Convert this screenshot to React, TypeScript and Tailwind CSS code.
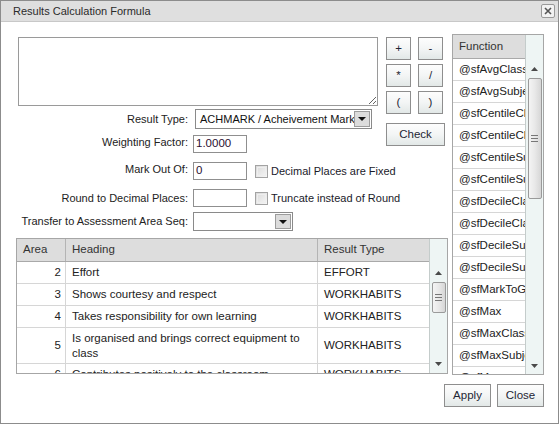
import React from 'react';

const font = { fontFamily: '"Liberation Sans", Arial, sans-serif' };

const Btn: React.FC<{ label: string; className?: string }> = ({ label, className = '' }) => (
  <button
    className={`flex items-center justify-center border border-[#8e8e8e] bg-linear-to-b from-[#fdfdfd] via-[#f3f5f5] to-[#e2e8e7] text-[11.5px] text-[#1e2634] ${className}`}
  >
    {label}
  </button>
);

const Arrow: React.FC<{ down?: boolean }> = ({ down }) => (
  <svg width="7" height="4" viewBox="0 0 7 4" className="block shrink-0">
    {down ? <path d="M0 0h7L3.5 4z" fill="#4a4a4a" /> : <path d="M0 4h7L3.5 0z" fill="#4a4a4a" />}
  </svg>
);

// fake vertical scrollbar, offsets in px from its top
const Scrollbar: React.FC<{ arrowTop: number; thumbTop: number; thumbHeight: number; downBottom: number }> = ({
  arrowTop,
  thumbTop,
  thumbHeight,
  downBottom,
}) => (
  <div className="flex h-full w-[18px] shrink-0 flex-col items-center border-l border-[#c4cccb] bg-[#eef5f4]">
    <div style={{ height: arrowTop }} className="shrink-0" />
    <Arrow />
    <div style={{ height: thumbTop - arrowTop - 4 }} className="shrink-0" />
    <div
      style={{ height: thumbHeight }}
      className="flex w-[14px] shrink-0 flex-col items-center justify-center gap-[2px] rounded-[2px] border border-[#9a9a9a] bg-linear-to-r from-[#f4f4f4] via-[#e8e8e8] to-[#d6d6d6]"
    >
      <div className="h-px w-[7px] bg-[#777]" />
      <div className="h-px w-[7px] bg-[#777]" />
      <div className="h-px w-[7px] bg-[#777]" />
    </div>
    <div className="flex-1" />
    <Arrow down />
    <div style={{ height: downBottom }} className="shrink-0" />
  </div>
);

const Select: React.FC<{ value?: string; className?: string }> = ({ value = '', className = '' }) => (
  <div className={`flex items-center border border-[#8a8a8a] bg-white p-px ${className}`}>
    <span className="flex-1 overflow-hidden whitespace-nowrap pl-[3px] text-[11px] text-[#111]">{value}</span>
    <div className="flex h-full w-[16px] shrink-0 items-center justify-center border border-[#9c9c9c] bg-[#dcdcdc]">
      <svg width="8" height="4" viewBox="0 0 8 4">
        <path d="M0 0h8L4 4z" fill="#111" />
      </svg>
    </div>
  </div>
);

const Input: React.FC<{ value?: string }> = ({ value = '' }) => (
  <div className="flex h-[18px] w-[54px] shrink-0 items-center border border-[#8f8f8f] bg-white pl-[2px] text-[11.5px] text-[#2a1030]">
    {value}
  </div>
);

const Check: React.FC<{ label: string }> = ({ label }) => (
  <div className="ml-[8px] flex h-[18px] items-center gap-[3px] whitespace-nowrap">
    <div className="h-[13px] w-[13px] shrink-0 border border-[#a3a3a3] bg-linear-to-br from-[#d9d9d9] to-[#f7f7f7] p-px">
      <div className="h-full w-full border border-[#eeeeee]" />
    </div>
    <span className="text-[#1a1a2a]">{label}</span>
  </div>
);

const rows = [
  { area: '2', heading: 'Effort', type: 'EFFORT', tall: false },
  { area: '3', heading: 'Shows courtesy and respect', type: 'WORKHABITS', tall: false },
  { area: '4', heading: 'Takes responsibility for own learning', type: 'WORKHABITS', tall: false },
  { area: '5', heading: 'Is organised and brings correct equipment to class', type: 'WORKHABITS', tall: true },
  { area: '6', heading: 'Contributes positively to the classroom', type: 'WORKHABITS', tall: false },
];

const functions = [
  '@sfAvgClass',
  '@sfAvgSubject',
  '@sfCentileClass',
  '@sfCentileClassGroup',
  '@sfCentileSubject',
  '@sfCentileSubjectGroup',
  '@sfDecileClass',
  '@sfDecileClassGroup',
  '@sfDecileSubject',
  '@sfDecileSubjectGroup',
  '@sfMarkToGrade',
  '@sfMax',
  '@sfMaxClass',
  '@sfMaxSubject',
  '@sfMean',
];

export default function App() {
  return (
    <div style={font} className="flex h-[424px] w-[559px] flex-col overflow-hidden border border-[#8c8c8c] bg-white text-[11px] text-[#222]">
      {/* title bar */}
      <div className="flex h-[21px] shrink-0 items-center justify-between border-b border-[#c8c8c8] bg-[#dfdfdf] pl-[12px] pr-[3px]">
        <span className="text-[11px] text-[#2b2b2b]">Results Calculation Formula</span>
        <div className="flex h-[14px] w-[14px] items-center justify-center rounded-[2px] border border-[#9a9a9a] bg-[#f2f2f2]">
          <svg width="8" height="8" viewBox="0 0 8 8">
            <path d="M1 1l6 6M7 1l-6 6" stroke="#555" strokeWidth="1.6" />
          </svg>
        </div>
      </div>

      <div className="flex flex-col pl-[15px] pt-[12px]">
        <div className="flex gap-[4px]">
          {/* left side */}
          <div className="flex w-[432px] shrink-0 flex-col">
            <div className="flex pt-[3px]">
              <div className="flex w-[370px] shrink-0 flex-col whitespace-nowrap">
                <textarea className="ml-[2px] h-[69px] w-[360px] resize border border-[#9a9a9a] outline-none" />

                <div className="mt-[3px] flex items-center">
                  <div className="w-[177px] shrink-0 pr-[5px] text-right">Result Type:</div>
                  <Select value="ACHMARK / Acheivement Mark" className="ml-[2px] h-[20px] w-[177px]" />
                </div>
                <div className="mt-[6px] flex items-start">
                  <div className="w-[177px] shrink-0 pr-[5px] text-right leading-[14px]">Weighting Factor:</div>
                  <Input value="1.0000" />
                </div>
                <div className="mt-[9px] flex items-start">
                  <div className="w-[177px] shrink-0 pr-[5px] text-right leading-[14px]">Mark Out Of:</div>
                  <Input value="0" />
                  <Check label="Decimal Places are Fixed" />
                </div>
                <div className="mt-[9px] flex items-start">
                  <div className="w-[177px] shrink-0 pr-[5px] pt-[2px] text-right leading-[14px]">Round to Decimal Places:</div>
                  <Input />
                  <Check label="Truncate instead of Round" />
                </div>
                <div className="mt-[5px] flex items-center">
                  <div className="w-[177px] shrink-0 pr-[5px] text-right">Transfer to Assessment Area Seq:</div>
                  <Select className="h-[19px] w-[100px]" />
                </div>
              </div>

              <div className="flex flex-col">
                <div className="grid grid-cols-[25px_25px] gap-x-[7px] gap-y-[4px]">
                  <Btn label="+" className="h-[23px]" />
                  <Btn label="-" className="h-[23px]" />
                  <Btn label="*" className="h-[23px]" />
                  <Btn label="/" className="h-[23px]" />
                  <Btn label="(" className="h-[23px]" />
                  <Btn label=")" className="h-[23px]" />
                </div>
                <Btn label="Check" className="mt-[9px] h-[23px] w-[59px]" />
              </div>
            </div>

            {/* areas table */}
            <div className="mt-[7px] flex h-[136px] overflow-hidden border border-[#a6a6a6]">
              <div className="flex w-[413px] flex-col overflow-hidden text-[11.5px]">
                <div className="flex h-[23px] shrink-0 border-b border-[#a9a9a9] bg-[#dddddd] text-[#333]">
                  <div className="flex w-[49px] items-center border-r border-[#b4b4b4] pl-[6px]">Area</div>
                  <div className="flex w-[252px] items-center border-r border-[#b4b4b4] pl-[6px]">Heading</div>
                  <div className="flex flex-1 items-center pl-[6px]">Result Type</div>
                </div>
                {rows.map((r) => (
                  <div key={r.area} className={`flex shrink-0 border-b border-[#d6d6d6] ${r.tall ? 'h-[36px]' : 'h-[22px]'}`}>
                    <div className="flex w-[49px] items-center justify-end border-r border-[#d6d6d6] pr-[4px]">{r.area}</div>
                    <div className="flex w-[252px] items-center overflow-hidden border-r border-[#d6d6d6] px-[6px] leading-[15px]">
                      <span className={r.tall ? '' : 'whitespace-nowrap'}>{r.heading}</span>
                    </div>
                    <div className="flex flex-1 items-center pl-[6px]">{r.type}</div>
                  </div>
                ))}
              </div>
              <Scrollbar arrowTop={32} thumbTop={43} thumbHeight={31} downBottom={7} />
            </div>
          </div>

          {/* function list */}
          <div className="flex h-[341px] w-[92px] shrink-0 overflow-hidden border border-[#a6a6a6]">
            <div className="flex w-[73px] flex-col overflow-hidden text-[11.5px]">
              <div className="flex h-[24px] shrink-0 items-center border-b border-[#a9a9a9] bg-[#dddddd] pl-[6px] text-[#333]">
                Function
              </div>
              {functions.map((f) => (
                <div key={f} className="flex h-[22px] shrink-0 items-center overflow-hidden whitespace-nowrap border-b border-[#d6d6d6] pl-[6px]">
                  {f}
                </div>
              ))}
            </div>
            <Scrollbar arrowTop={32} thumbTop={43} thumbHeight={121} downBottom={6} />
          </div>
        </div>

        <div className="mt-[9px] flex justify-end gap-[6px] pr-[14px]">
          <Btn label="Apply" className="h-[23px] w-[47px]" />
          <Btn label="Close" className="h-[23px] w-[47px]" />
        </div>
      </div>
    </div>
  );
}
